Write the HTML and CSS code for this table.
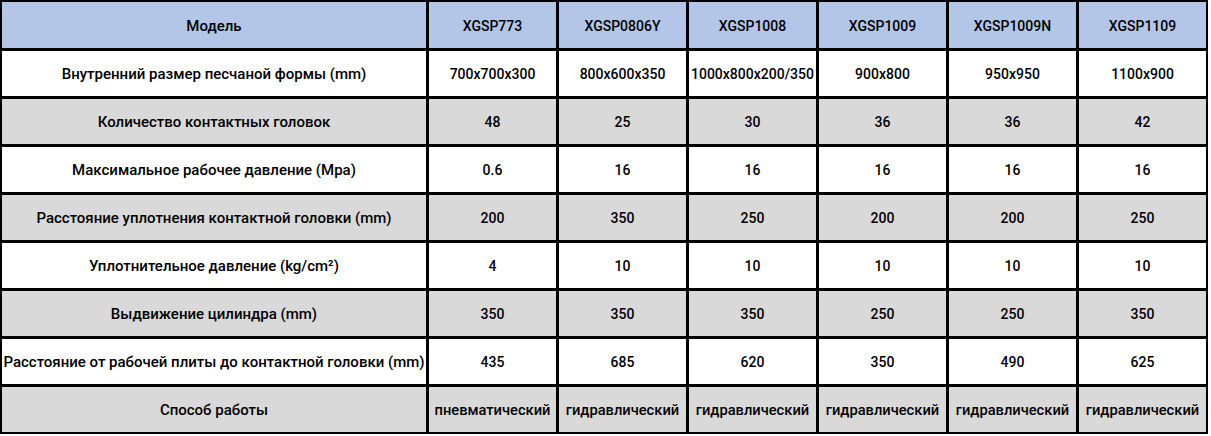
FILE: index.html
```html
<!DOCTYPE html>
<html lang="ru">
<head>
<meta charset="utf-8">
<link rel="stylesheet" href="styles.css">
</head>
<body>
<div class="sheet">
  <div class="cell head label">Модель</div>
  <div class="cell head">XGSP773</div>
  <div class="cell head">XGSP0806Y</div>
  <div class="cell head">XGSP1008</div>
  <div class="cell head">XGSP1009</div>
  <div class="cell head">XGSP1009N</div>
  <div class="cell head">XGSP1109</div>

  <div class="cell label">Внутренний размер песчаной формы (mm)</div>
  <div class="cell">700x700x300</div>
  <div class="cell">800x600x350</div>
  <div class="cell">1000x800x200/350</div>
  <div class="cell">900x800</div>
  <div class="cell">950x950</div>
  <div class="cell">1100x900</div>

  <div class="cell alt label">Количество контактных головок</div>
  <div class="cell alt">48</div>
  <div class="cell alt">25</div>
  <div class="cell alt">30</div>
  <div class="cell alt">36</div>
  <div class="cell alt">36</div>
  <div class="cell alt">42</div>

  <div class="cell label">Максимальное рабочее давление (Mpa)</div>
  <div class="cell">0.6</div>
  <div class="cell">16</div>
  <div class="cell">16</div>
  <div class="cell">16</div>
  <div class="cell">16</div>
  <div class="cell">16</div>

  <div class="cell alt label">Расстояние уплотнения контактной головки (mm)</div>
  <div class="cell alt">200</div>
  <div class="cell alt">350</div>
  <div class="cell alt">250</div>
  <div class="cell alt">200</div>
  <div class="cell alt">200</div>
  <div class="cell alt">250</div>

  <div class="cell label">Уплотнительное давление (kg/cm²)</div>
  <div class="cell">4</div>
  <div class="cell">10</div>
  <div class="cell">10</div>
  <div class="cell">10</div>
  <div class="cell">10</div>
  <div class="cell">10</div>

  <div class="cell alt label">Выдвижение цилиндра (mm)</div>
  <div class="cell alt">350</div>
  <div class="cell alt">350</div>
  <div class="cell alt">350</div>
  <div class="cell alt">250</div>
  <div class="cell alt">250</div>
  <div class="cell alt">350</div>

  <div class="cell label">Расстояние от рабочей плиты до контактной головки (mm)</div>
  <div class="cell">435</div>
  <div class="cell">685</div>
  <div class="cell">620</div>
  <div class="cell">350</div>
  <div class="cell">490</div>
  <div class="cell">625</div>

  <div class="cell alt label">Способ работы</div>
  <div class="cell alt word">пневматический</div>
  <div class="cell alt word">гидравлический</div>
  <div class="cell alt word">гидравлический</div>
  <div class="cell alt word">гидравлический</div>
  <div class="cell alt word">гидравлический</div>
  <div class="cell alt word">гидравлический</div>
</div>
</body>
</html>
```
FILE: styles.css
```css
html, body {
  margin: 0;
  padding: 0;
  background: #ffffff;
}

.sheet {
  display: grid;
  grid-template-columns: 424px repeat(6, 127px);
  grid-template-rows: 46px repeat(8, 45px);
  gap: 3px;
  padding: 2px;
  background: #000000;
  width: fit-content;
  font-family: Roboto, "Noto Sans", "Liberation Sans", sans-serif;
  font-size: 14px;
  font-weight: 500;
  color: #000000;
}

.cell {
  display: flex;
  align-items: center;
  justify-content: center;
  padding-top: 1px;
  background: #ffffff;
  white-space: nowrap;
  overflow: hidden;
  text-align: center;
}

.label {
  font-size: 15px;
}

.word {
  font-size: 14.7px;
}

.head {
  background: #b4c6e7;
}

.alt {
  background: #d9d9d9;
}
```
